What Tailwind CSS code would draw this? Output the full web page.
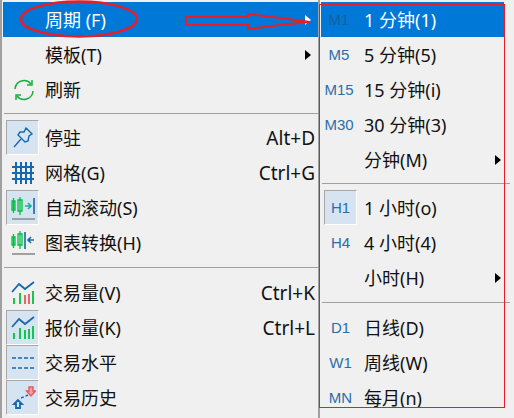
<!DOCTYPE html>
<html lang="zh-CN">
<head>
<meta charset="UTF-8" />
<title>周期菜单</title>
<script src="https://cdn.jsdelivr.net/npm/@tailwindcss/browser@4"></script>
</head>
<body class="bg-[#f0f0f0]">
<div class="relative flex w-[514px] h-[418px] overflow-hidden bg-[#f0f0f0] text-[18px] leading-[24px] text-[#111] font-['Noto_Sans','Noto_Sans_CJK_SC',sans-serif]">

  <!-- main menu -->
  <div class="w-[318px] h-full shrink-0 border-l-[2px] border-[#a0a0a0] pt-[2px] pl-[1px]">
    <div class="flex items-center h-[35px] bg-[#0078d7] text-white">
      <span class="ml-[42px] flex-1">周期 (F)</span>
      <svg class="mr-[7px]" width="6" height="10" viewBox="0 0 6 10"><path d="M0 0L6 5L0 10Z" fill="#fff"/></svg>
    </div>
    <div class="flex items-center h-[35px]">
      <span class="ml-[42px] flex-1">模板(T)</span>
      <svg class="mr-[7px]" width="6" height="10" viewBox="0 0 6 10"><path d="M0 0L6 5L0 10Z" fill="#000"/></svg>
    </div>
    <div class="flex items-center h-[35px]">
      <div class="w-[39px] flex justify-center pl-[3px]">
        <svg width="22" height="22" viewBox="0 0 22 22" fill="none" stroke="#12b03c" stroke-width="1.5"><path d="M2 10A9 9 0 0 1 18 5"/><path d="M19 1V6H14"/><path d="M20 12A9 9 0 0 1 4 17"/><path d="M3 21V16H8"/></svg>
      </div>
      <span class="ml-[3px]">刷新</span>
    </div>
    <div class="h-[13px] flex items-center pl-[1px]"><div class="w-full h-[1px] bg-[#a0a0a0]"></div></div>

    <div class="flex items-center h-[35px]">
      <div class="ml-[3px] w-[33px] h-[35px] flex items-center justify-center bg-[#d6e4f2] border-l border-t border-[#a8a8a8] border-r border-b border-r-white border-b-white">
        <svg width="22" height="22" viewBox="0 0 22 22" fill="none" stroke="#1568ad" stroke-width="1.4"><path d="M14 1L20 7L17 9L16 14L13 15L6 8L8 5L12 5Z"/><path d="M9 12L2 20"/></svg>
      </div>
      <span class="ml-[6px] flex-1">停驻</span><span class="mr-[3px] text-[19px]">Alt+D</span>
    </div>
    <div class="flex items-center h-[35px]">
      <div class="ml-[3px] w-[33px] h-[35px] flex items-center justify-center">
        <svg width="24" height="24" viewBox="0 0 24 24" fill="none" stroke="#1568ad" stroke-width="2"><path d="M1 6H23M1 12H23M1 18H23M5 1V23M10 1V23M15 1V23M20 1V23"/></svg>
      </div>
      <span class="ml-[6px] flex-1">网格(G)</span><span class="mr-[3px] text-[19px]">Ctrl+G</span>
    </div>
    <div class="flex items-center h-[35px]">
      <div class="ml-[3px] w-[33px] h-[35px] flex items-center justify-center bg-[#d6e4f2] border-l border-t border-[#a8a8a8] border-r border-b border-r-white border-b-white">
        <svg width="24" height="26" viewBox="0 0 24 26" fill="none" stroke-width="1.3"><path d="M1 6H4V15H1ZM2.500 3V18M7 5H11V16H7ZM9 2V20" stroke="#00c040"/><path d="M14 11H20M17 8L20 11L17 14" stroke="#1bab9a" stroke-width="1.6"/><path d="M23 3V19" stroke="#1568ad" stroke-width="1.6"/><path d="M1 24H24" stroke="#a0a0a0" stroke-width="2"/></svg>
      </div>
      <span class="ml-[6px]">自动滚动(S)</span>
    </div>
    <div class="flex items-center h-[35px]">
      <div class="ml-[3px] w-[33px] h-[35px] flex items-center justify-center">
        <svg width="24" height="26" viewBox="0 0 24 26" fill="none" stroke-width="1.3"><path d="M1 7H4V15H1ZM2.500 4V18M7 4H11V15H7ZM9 1V19" stroke="#00c040"/><path d="M14 2V19" stroke="#1568ad" stroke-width="1.6"/><path d="M17 10H23M20 7L17 10L20 13" stroke="#1568ad" stroke-width="1.6"/><path d="M1 24H24" stroke="#a0a0a0" stroke-width="2"/></svg>
      </div>
      <span class="ml-[6px]">图表转换(H)</span>
    </div>
    <div class="h-[15px] flex items-center pl-[1px]"><div class="w-full h-[1px] bg-[#a0a0a0]"></div></div>

    <div class="flex items-center h-[35px]">
      <div class="ml-[3px] w-[33px] h-[35px] flex items-center justify-center">
        <svg width="24" height="24" viewBox="0 0 24 24" fill="none" stroke-width="1.8"><path d="M1 11L8 3L14 8L23 1" stroke="#1568ad"/><path d="M3 23V17M9 23V12" stroke="#00c040"/><path d="M14 23V14M18 23V13" stroke="#e45a5a"/><path d="M22 23V10" stroke="#00c040"/></svg>
      </div>
      <span class="ml-[6px] flex-1">交易量(V)</span><span class="mr-[3px] text-[19px]">Ctrl+K</span>
    </div>
    <div class="flex items-center h-[35px]">
      <div class="ml-[3px] w-[33px] h-[35px] flex items-center justify-center bg-[#d6e4f2] border-l border-t border-[#a8a8a8] border-r border-b border-r-white border-b-white">
        <svg width="24" height="24" viewBox="0 0 24 24" fill="none" stroke-width="1.8"><path d="M1 11L8 3L14 8L23 1" stroke="#1568ad"/><path d="M3 23V17M9 23V12M14 23V14M18 23V13M22 23V10" stroke="#00c040"/></svg>
      </div>
      <span class="ml-[6px] flex-1">报价量(K)</span><span class="mr-[3px] text-[19px]">Ctrl+L</span>
    </div>
    <div class="flex items-center h-[35px]">
      <div class="ml-[3px] w-[33px] h-[35px] flex items-center justify-center bg-[#d6e4f2] border-l border-t border-[#a8a8a8] border-r border-b border-r-white border-b-white">
        <svg width="24" height="16" viewBox="0 0 24 16" fill="none" stroke="#1568ad" stroke-width="1.6" stroke-dasharray="4 2"><path d="M1 3H24M1 13H24"/></svg>
      </div>
      <span class="ml-[6px]">交易水平</span>
    </div>
    <div class="flex items-center h-[35px]">
      <div class="ml-[3px] w-[33px] h-[35px] flex items-center justify-center bg-[#d6e4f2] border-l border-t border-[#a8a8a8] border-r border-b border-r-white border-b-white">
        <svg width="26" height="28" viewBox="0 0 26 28" fill="none"><path d="M8 16L4 20H6V24H10V20H12Z" stroke="#1568ad" stroke-width="1.8"/><path d="M11 14L18 11" stroke="#1568ad" stroke-width="1.4" stroke-dasharray="3 2"/><path d="M19 3H23V7H25.500L21 12L16.500 7H19Z" stroke="#e45a5a" stroke-width="1.4" fill="#f4a0a0"/></svg>
      </div>
      <span class="ml-[6px]">交易历史</span>
    </div>
  </div>

  <!-- submenu -->
  <div class="flex-1 h-[417px] border-l-[2px] border-b-[2px] border-[#a0a0a0] pt-[2px] pl-[1px] box-content [&_b]:font-normal [&_b]:text-[15px] [&_b]:font-['Liberation_Sans',sans-serif]">
    <div class="flex items-center h-[35px] bg-[#0078d7] text-white w-[183px]">
      <b class="w-[36px] text-center text-[#1a5f9e]">M1</b><span class="ml-[7px]">1 分钟(1)</span>
    </div>
    <div class="flex items-center h-[35px]"><b class="w-[36px] text-center text-[#2a6ea8]">M5</b><span class="ml-[7px]">5 分钟(5)</span></div>
    <div class="flex items-center h-[35px]"><b class="w-[36px] text-center text-[#2a6ea8]">M15</b><span class="ml-[7px]">15 分钟(i)</span></div>
    <div class="flex items-center h-[35px]"><b class="w-[36px] text-center text-[#2a6ea8]">M30</b><span class="ml-[7px]">30 分钟(3)</span></div>
    <div class="flex items-center h-[35px] w-[183px]">
      <span class="ml-[43px] flex-1">分钟(M)</span>
      <svg class="mr-[3px]" width="6" height="10" viewBox="0 0 6 10"><path d="M0 0L6 5L0 10Z" fill="#000"/></svg>
    </div>
    <div class="h-[13px] flex items-center pl-[1px] pr-[4px]"><div class="w-full h-[1px] bg-[#a0a0a0]"></div></div>
    <div class="flex items-center h-[35px]">
      <b class="ml-[3px] w-[33px] h-[35px] flex items-center justify-center text-[#2a6ea8] bg-[#d6e4f2] border-l border-t border-[#a8a8a8] border-r border-b border-r-white border-b-white">H1</b><span class="ml-[7px]">1 小时(o)</span>
    </div>
    <div class="flex items-center h-[35px]"><b class="w-[36px] pl-[3px] text-center text-[#2a6ea8]">H4</b><span class="ml-[7px]">4 小时(4)</span></div>
    <div class="flex items-center h-[35px] w-[183px]">
      <span class="ml-[43px] flex-1">小时(H)</span>
      <svg class="mr-[3px]" width="6" height="10" viewBox="0 0 6 10"><path d="M0 0L6 5L0 10Z" fill="#000"/></svg>
    </div>
    <div class="h-[15px] flex items-center pl-[1px] pr-[4px]"><div class="w-full h-[1px] bg-[#a0a0a0]"></div></div>
    <div class="flex items-center h-[35px]"><b class="w-[36px] pl-[3px] text-center text-[#2a6ea8]">D1</b><span class="ml-[7px]">日线(D)</span></div>
    <div class="flex items-center h-[35px]"><b class="w-[36px] pl-[3px] text-center text-[#2a6ea8]">W1</b><span class="ml-[7px]">周线(W)</span></div>
    <div class="flex items-center h-[35px]"><b class="w-[36px] pl-[3px] text-center text-[#2a6ea8]">MN</b><span class="ml-[7px]">每月(n)</span></div>
  </div>

  <!-- red annotations drawn over the menu -->
  <svg class="absolute left-0 top-0 pointer-events-none" width="514" height="418" viewBox="0 0 514 418" fill="none">
    <ellipse cx="79" cy="19" rx="58" ry="17.500" stroke="#ed1c24" stroke-width="2.500"/>
    <path d="M186 17H248V14L280 18L310 22L280 25L248 29V25H186Z" stroke="#ed1c24" stroke-width="2"/>
    <rect x="319.500" y="4.500" width="185" height="403" stroke="#ed1c24" stroke-width="1"/>
  </svg>
</div>
</body>
</html>
